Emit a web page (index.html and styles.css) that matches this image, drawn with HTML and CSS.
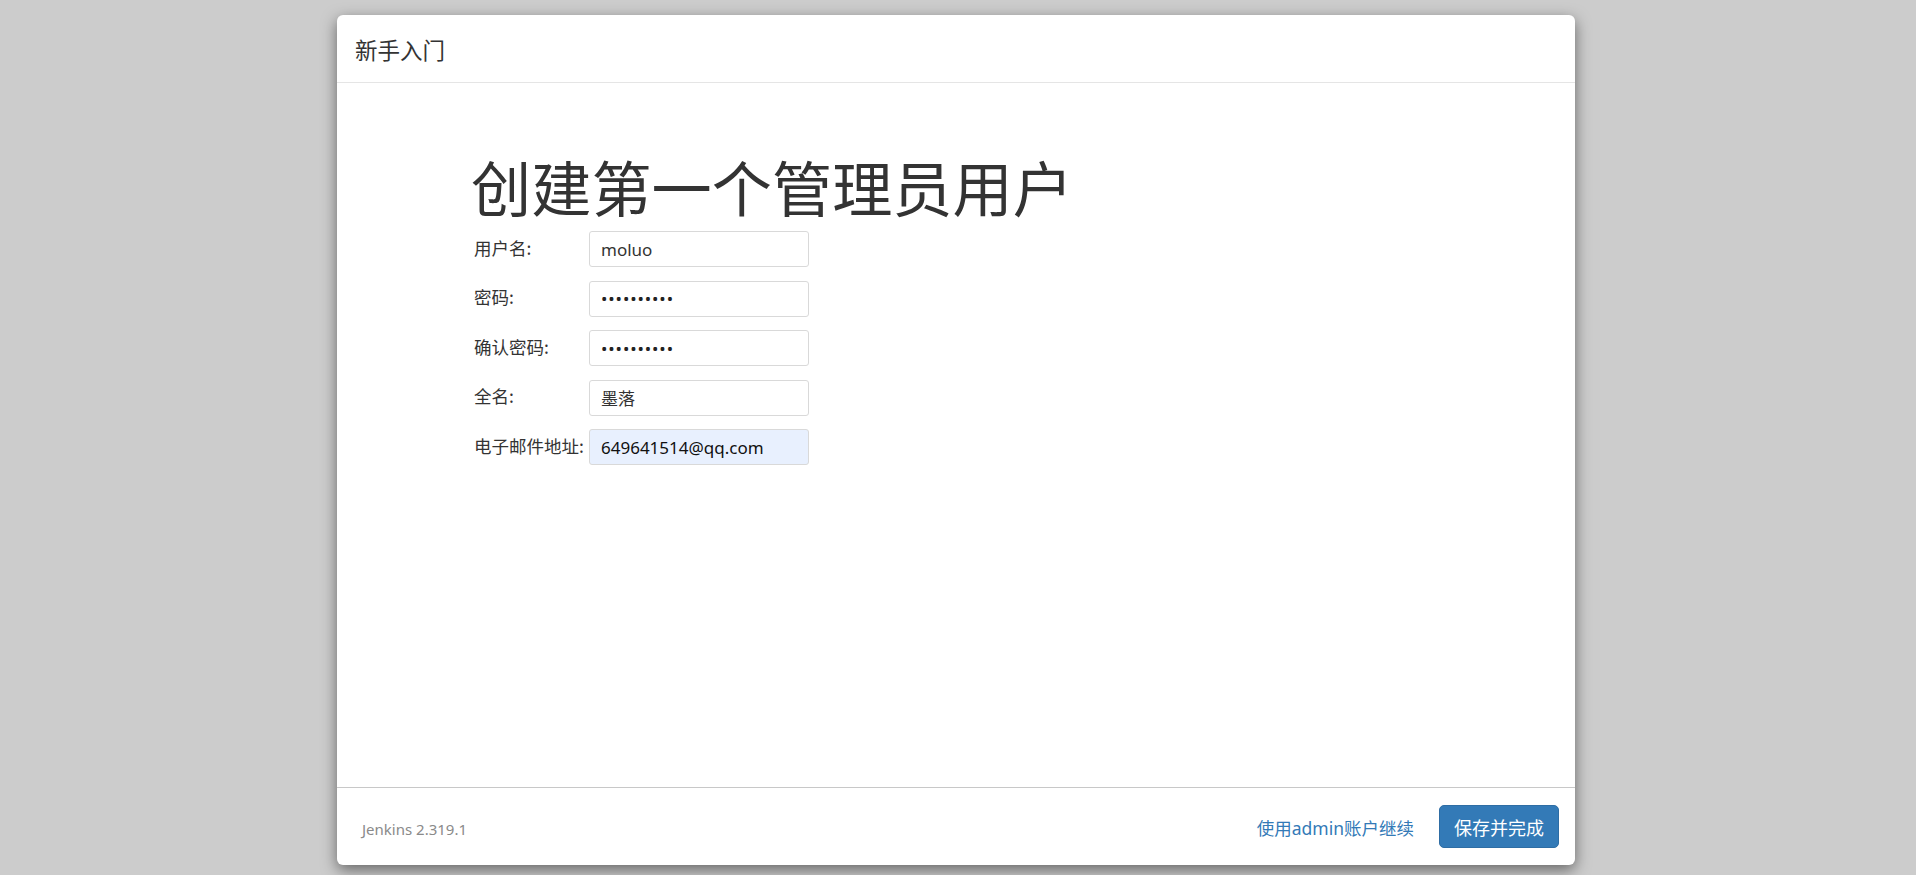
FILE: index.html
```html
<!DOCTYPE html>
<html lang="zh-CN">
<head>
<meta charset="utf-8">
<title>新手入门</title>
<link rel="stylesheet" href="styles.css">
</head>
<body>
<div class="modal">
  <div class="modal-header">
    <h4 class="modal-title">新手入门</h4>
  </div>
  <div class="modal-body">
    <div class="content">
      <h1 class="title">创建第一个管理员用户</h1>
      <table class="form">
        <tr>
          <td class="label">用户名:</td>
          <td><input class="field" type="text" value="moluo"></td>
        </tr>
        <tr>
          <td class="label">密码:</td>
          <td><input class="field" type="password" value="1234567890"></td>
        </tr>
        <tr>
          <td class="label">确认密码:</td>
          <td><input class="field" type="password" value="1234567890"></td>
        </tr>
        <tr>
          <td class="label">全名:</td>
          <td><input class="field" type="text" value="墨落"></td>
        </tr>
        <tr>
          <td class="label">电子邮件地址:</td>
          <td><input class="field autofill" type="text" value="649641514@qq.com"></td>
        </tr>
      </table>
    </div>
  </div>
  <div class="modal-footer">
    <div class="version">Jenkins 2.319.1</div>
    <div class="actions">
      <a class="link" href="#">使用admin账户继续</a>
      <button class="btn-primary" type="button">保存并完成</button>
    </div>
  </div>
</div>
</body>
</html>
```
FILE: styles.css
```css
html, body {
  margin: 0;
  padding: 0;
}
body {
  background: #cccccc;
  font-family: "Noto Sans", "Noto Sans CJK SC", sans-serif;
  color: #333333;
  padding-top: 15px;
  height: 875px;
  box-sizing: border-box;
  overflow: hidden;
}
.modal {
  width: 1238px;
  height: 850px;
  margin-left: 337px;
  background: #ffffff;
  border-radius: 6px;
  box-shadow: 0 5px 15px rgba(0, 0, 0, 0.5);
  display: flex;
  flex-direction: column;
  overflow: hidden;
}
.modal-header {
  height: 67px;
  border-bottom: 1px solid #e5e5e5;
  display: flex;
  align-items: center;
  padding-left: 18px;
  flex: none;
}
.modal-title {
  margin: 0;
  font-family: "Noto Sans CJK SC", sans-serif;
  font-weight: 400;
  font-size: 22.5px;
  color: #333333;
}
.modal-body {
  flex: 1;
}
.content {
  padding: 58px 0 0 134px;
}
.title {
  margin: 0;
  font-family: "Noto Sans CJK SC", sans-serif;
  font-weight: 400;
  font-size: 60.2px;
  line-height: 90px;
  color: #333333;
}
.form {
  border-collapse: collapse;
  margin-top: 0;
}
.form td {
  padding: 0 0 13.5px 0;
  vertical-align: middle;
}
.label {
  width: 115px;
  padding-left: 3px !important;
  font-family: "Noto Sans CJK SC", sans-serif;
  font-size: 17.5px;
  color: #333333;
  padding-bottom: 17px !important;
}
.field {
  box-sizing: border-box;
  width: 220px;
  height: 36px;
  border: 1px solid #d9d9d9;
  border-radius: 3px;
  padding: 0 11px;
  font-family: "Noto Sans", "Noto Sans CJK SC", sans-serif;
  font-size: 17px;
  color: #333333;
  background: #ffffff;
  outline: none;
  display: block;
}
.field[type="password"] {
  color: #222222;
  letter-spacing: 0.9px;
}
.autofill {
  background: #e8f0fe;
  color: #111111;
}
.modal-footer {
  flex: none;
  height: 77px;
  border-top: 1px solid #c8c8c8;
  display: flex;
  align-items: center;
  justify-content: space-between;
  padding: 0 16px 0 25px;
}
.version {
  font-size: 15px;
  color: #8a8a8a;
  padding-top: 5px;
}
.actions {
  display: flex;
  align-items: center;
  gap: 25px;
}
.link {
  color: #337ab7;
  text-decoration: none;
  font-family: "Noto Sans", "Noto Sans CJK SC", sans-serif;
  font-size: 17.5px;
  padding-top: 1px;
}
.btn-primary {
  width: 120px;
  height: 43px;
  background: #337ab7;
  border: 1px solid #2e6da4;
  border-radius: 5px;
  color: #ffffff;
  font-family: "Noto Sans CJK SC", sans-serif;
  font-size: 18px;
  padding: 0;
  cursor: pointer;
}
```
